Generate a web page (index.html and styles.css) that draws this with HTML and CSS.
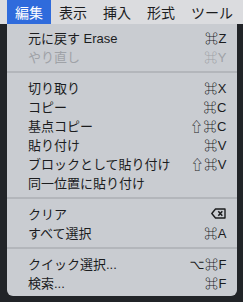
FILE: index.html
```html
<!DOCTYPE html>
<html lang="ja">

<head>
  <meta charset="UTF-8" />
  <meta name="viewport" content="width=device-width, initial-scale=1.0" />
  <title>編集メニュー</title>
  <link rel="stylesheet" href="styles.css">
</head>

<body>
  <nav class="menubar">
    <span class="menubar-item active">編集</span>
    <span class="menubar-item">表示</span>
    <span class="menubar-item">挿入</span>
    <span class="menubar-item">形式</span>
    <span class="menubar-item">ツール</span>
  </nav>

  <ul class="menu">
    <li class="menu-item"><span>元に戻す Erase</span><span class="key">⌘Z</span></li>
    <li class="menu-item disabled"><span>やり直し</span><span class="key">⌘Y</span></li>
    <li class="menu-sep"></li>
    <li class="menu-item"><span>切り取り</span><span class="key">⌘X</span></li>
    <li class="menu-item"><span>コピー</span><span class="key">⌘C</span></li>
    <li class="menu-item"><span>基点コピー</span><span class="key">⇧⌘C</span></li>
    <li class="menu-item"><span>貼り付け</span><span class="key">⌘V</span></li>
    <li class="menu-item"><span>ブロックとして貼り付け</span><span class="key">⇧⌘V</span></li>
    <li class="menu-item"><span>同一位置に貼り付け</span></li>
    <li class="menu-sep"></li>
    <li class="menu-item">
      <span>クリア</span>
      <svg class="key-icon" width="15" height="11" viewBox="0 0 15 11">
        <path d="M4.5 1 H14 V10 H4.5 L0.8 5.5 Z" fill="none" stroke="#1b1c1e" stroke-width="1.4" stroke-linejoin="round" />
        <path d="M7.3 3.2 L11.3 7.8 M11.3 3.2 L7.3 7.8" stroke="#1b1c1e" stroke-width="1.5" />
      </svg>
    </li>
    <li class="menu-item"><span>すべて選択</span><span class="key">⌘A</span></li>
    <li class="menu-sep"></li>
    <li class="menu-item"><span>クイック選択...</span><span class="key">⌥⌘F</span></li>
    <li class="menu-item"><span>検索...</span><span class="key">⌘F</span></li>
  </ul>
</body>

</html>
```

FILE: styles.css
```css
:root {
  --desk-color: #212428;
  --bar-color: #dbdcdf;
  --menu-color: #c9ccd1;
  --text-color: #1b1c1e;
  --disabled-color: #9fa2a7;
  --sep-color: #b3b6bb;
  --accent-color: #2f6bdc;
}

* {
  margin: 0;
  padding: 0;
  box-sizing: border-box;
}

body {
  font-family: "Liberation Sans", "Noto Sans CJK JP", "DejaVu Sans", sans-serif;
  font-size: 13px;
  color: var(--text-color);
  background-color: var(--desk-color);
  min-height: 100vh;
}

.menubar {
  display: flex;
  height: 24px;
  padding-left: 7px;
  background-color: var(--bar-color);
}

.menubar-item {
  display: flex;
  align-items: center;
  padding: 0 8px;
  font-size: 14px;
  white-space: nowrap;
}

.menubar-item.active {
  color: white;
  background-color: var(--accent-color);
}

.menu {
  list-style: none;
  width: 230px;
  margin-left: 7px;
  padding: 4px 0;
  background-color: var(--menu-color);
  border-radius: 0 0 6px 6px;
}

.menu-item {
  display: flex;
  justify-content: space-between;
  align-items: center;
  height: 19px;
  padding: 0 10px 0 21px;
  white-space: nowrap;
}

.menu-item.disabled {
  color: var(--disabled-color);
}

.key {
  letter-spacing: 0.5px;
}

.key-icon {
  display: block;
  margin-right: 1px;
}

.menu-sep {
  height: 12px;
  display: flex;
  align-items: center;
}

.menu-sep::before {
  content: "";
  display: block;
  width: 100%;
  height: 2px;
  background-color: var(--sep-color);
}
```
